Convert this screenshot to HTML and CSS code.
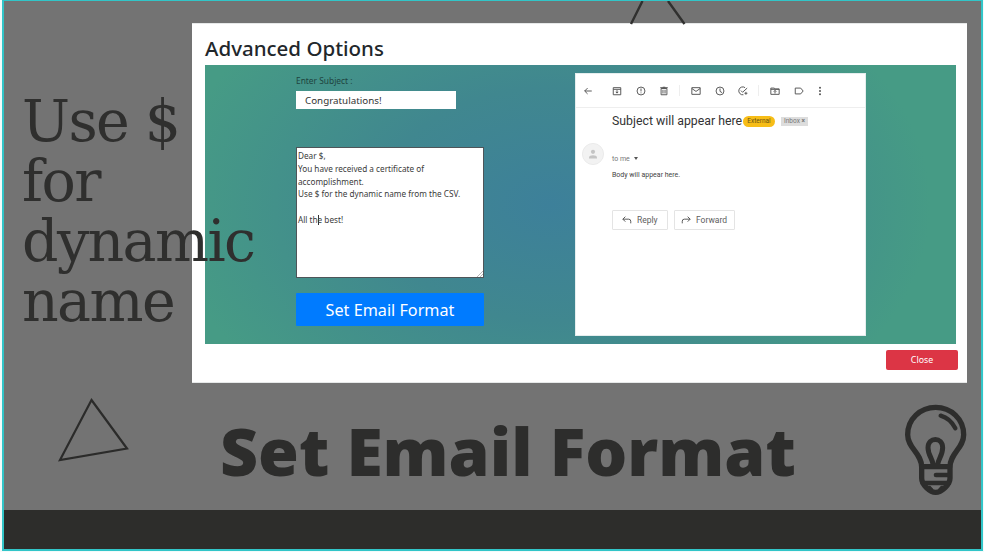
FILE: index.html
```html
<!DOCTYPE html>
<html lang="en">
<head>
<meta charset="utf-8">
<title>Set Email Format</title>
<link rel="stylesheet" href="styles.css">
</head>
<body>
<main class="slide">
  <svg class="tri tri-top" width="62" height="24" viewBox="0 0 62 24" fill="none" stroke="#30302f" stroke-width="2.4"><path d="M2 23L13.5 0M39 0L55.5 23"/></svg>
  <div class="upper">
    <h2 class="hint">Use $<br>for<br>dynamic<br>name</h2>
    <section class="modal">
      <h1 class="modal-title">Advanced Options</h1>
      <div class="panel">
        <form class="form">
          <label class="label">Enter Subject :</label>
          <div class="subject">Congratulations!</div>
          <div class="message">Dear $,<br>You have received a certificate of<br>accomplishment.<br>Use $ for the dynamic name from the CSV.<br><br>All th<i class="caret"></i>e best!
            <svg class="grip" width="6" height="6" viewBox="0 0 6 6" stroke="#999" stroke-width=".7"><path d="M0 6L6 0M3 6L6 3"/></svg>
          </div>
          <button class="set" type="button">Set Email Format</button>
        </form>
        <article class="mail">
          <div class="tools">
            <svg class="ico" viewBox="0 0 24 24"><path d="M21 12H4M11 5l-7 7 7 7"/></svg>
            <svg class="ico g1" viewBox="0 0 24 24"><path d="M3 4h18v17H3zM3 8h18M12 10v7M9 14l3 3 3-3"/></svg>
            <svg class="ico g2" viewBox="0 0 24 24"><circle cx="12" cy="12" r="9.5"/><path d="M12 6v7M12 15.5v2"/></svg>
            <svg class="ico g2" viewBox="0 0 24 24"><path d="M5 6h14v15H5zM3 4h18M9 3h6M9.5 9v9M14.5 9v9"/></svg>
            <i class="sep"></i>
            <svg class="ico" viewBox="0 0 24 24"><path d="M2 4h20v16H2zM2 6l10 7 10-7"/></svg>
            <svg class="ico g2" viewBox="0 0 24 24"><circle cx="12" cy="12" r="9.5"/><path d="M12 6v7l5 3"/></svg>
            <svg class="ico g2" viewBox="0 0 24 24"><path d="M17 4A9.500 9.500 0 1 0 13 21M7 11l4 4L22 5M19 14v7M15.500 17.500h7"/></svg>
            <i class="sep"></i>
            <svg class="ico" viewBox="0 0 24 24"><path d="M2 5h8l2 2h10v13H2zM2 8h20M12 18v-7M9 13.500l3-3 3 3"/></svg>
            <svg class="ico g2" viewBox="0 0 24 24"><path d="M3 5h13l6 7-6 7H3z"/></svg>
            <svg class="ico g3 dots" viewBox="0 0 24 24"><circle cx="12" cy="4" r="2.400"/><circle cx="12" cy="12" r="2.400"/><circle cx="12" cy="20" r="2.400"/></svg>
          </div>
          <div class="subject-row">
            <span class="subject-text">Subject will appear here</span>
            <span class="external">External</span>
            <span class="inbox">Inbox <b>×</b></span>
          </div>
          <div class="content">
            <svg class="avatar" width="22" height="22" viewBox="0 0 22 22"><circle cx="11" cy="11" r="10.600" fill="#f2f2f2" stroke="#e7e7e7" stroke-width=".8"/><circle cx="11" cy="8.800" r="2.100" fill="#c4c4c4"/><path d="M7 15.500v-1c0-3 8-3 8 0v1z" fill="#c4c4c4"/></svg>
            <div class="text">
              <p class="to">to me <i class="down"></i></p>
              <p class="body">Body will appear here.</p>
              <div class="actions">
                <span class="action reply"><svg class="ico" viewBox="0 0 24 24"><path d="M8 4L2 10l6 6M2 10h14q5 0 5 5v5"/></svg>Reply</span>
                <span class="action forward"><svg class="ico" viewBox="0 0 24 24"><path d="M16 4l6 6-6 6M22 10H8q-5 0-5 5v5"/></svg>Forward</span>
              </div>
            </div>
          </div>
        </article>
      </div>
      <button class="close" type="button">Close</button>
    </section>
  </div>
  <div class="lower">
    <svg class="triangle" width="74" height="68" viewBox="0 0 74 68" fill="none" stroke="#2b2b2a" stroke-width="2.200"><path d="M35.500 4L71 52.500 4 64z"/></svg>
    <h2 class="headline">Set Email Format</h2>
    <svg class="bulb" width="64" height="93" viewBox="42 24 192 279" fill="none" stroke="#2d2d2c" stroke-width="16" stroke-linecap="round" stroke-linejoin="round">
      <path d="M95 216C95 174 53 160 53 119C53 72 91 37 137 37S221 72 221 119C221 160 180 174 180 216V250C180 270 154 292 137 292S95 270 95 250z"/>
      <path d="M152 62Q181 70 196 100" stroke-width="13"/>
      <path d="M129 208C128 192 114 180 114 158C114 125 158 125 158 158C158 180 145 192 143 208" stroke-width="15"/>
      <path d="M96 215H179" stroke-width="16"/>
      <path d="M138 240H176" stroke-width="14"/>
      <path d="M98 264H176" stroke-width="14"/>
      <path d="M103 274H120L128 283 112 280zM171 274H154L146 283 162 280z" fill="#2d2d2c" stroke-width="4"/>
    </svg>
  </div>
  <footer class="bar"></footer>
</main>
</body>
</html>
```

FILE: styles.css
```css
* { box-sizing: border-box; }
body { margin: 0; background: #f4fafa; overflow: hidden; font-family: "Noto Sans", "Open Sans", sans-serif; }
h1, h2, p { margin: 0; font-weight: 400; }
button { border: 0; padding: 0; font-family: inherit; color: #fff; }
.slide { position: relative; display: flex; flex-direction: column; width: 981px; height: 551px; margin-left: 2px; border: 2px solid #32c5c8; border-top-width: 1px; background: #737373; }
.tri-top { position: absolute; left: 625px; top: 0; }
.upper { display: flex; height: 381px; padding-top: 22px; }
.hint { position: relative; z-index: 1; width: 188px; padding: 68px 0 0 18px; white-space: nowrap; color: #2f2f2e; font: 400 57px/60px "DejaVu Serif", serif; letter-spacing: -1.6px; }
.modal { display: flex; flex-direction: column; width: 775px; height: 360px; padding: 0 10px 0 13px; background: #fff; border: solid #e6e8e8; border-width: 1px 0 1px 0; }
.modal-title { height: 41px; color: #22272b; font-size: 20.5px; line-height: 49px; font-weight: 500; white-space: nowrap; }
.panel { display: flex; width: 751px; height: 279px; padding: 8px 0 0 91px; background: radial-gradient(ellipse 380px 260px at 46% 50%, #3d809a 0%, #40878f 45%, #469b85 100%); }
.form { display: flex; flex-direction: column; width: 279px; }
.label { height: 18px; font-size: 8.4px; line-height: 15px; color: #20443f; }
.subject { width: 160px; height: 18px; padding-left: 9px; background: #fff; color: #333; font-size: 9.8px; line-height: 19px; }
.message { position: relative; width: 188px; height: 131px; margin-top: 38px; padding: 2px 1px; border: 1px solid #4e5559; background: #fff; color: #3b3b3b; font-size: 8.2px; line-height: 12.8px; white-space: nowrap; }
.caret { display: inline-block; width: 1px; height: 10px; margin-right: -1px; vertical-align: -2px; background: #333; }
.grip { position: absolute; right: 0; bottom: 0; }
.set { width: 188px; height: 33px; margin-top: 15px; border-radius: 1px; background: #007bff; font-size: 16.2px; }
.mail { width: 291px; height: 263px; background: #fff; border: 1px solid #e5eeee; }
.ico { flex: none; width: 10px; height: 10px; fill: none; stroke: #555; stroke-width: 2.3; }
.dots { fill: #555; stroke: none; }
.tools { display: flex; align-items: center; height: 34px; padding-left: 7px; border-bottom: 1px solid #eee; }
.g1 { margin-left: 19px; }
.g2 { margin-left: 13.500px; }
.g3 { margin-left: 11px; }
.sep { width: 1px; height: 11px; margin: 0 11px 0 10px; background: #eee; }
.subject-row { display: flex; align-items: center; height: 26px; padding-left: 36px; white-space: nowrap; }
.subject-text { width: 131px; color: #333; font: 12.3px Roboto, sans-serif; }
.external { width: 32px; height: 11px; border-radius: 6px; background: #f7bd17; color: #6b5310; font: 6.5px/11px Roboto, sans-serif; text-align: center; }
.inbox { width: 27px; height: 9px; margin-left: 6px; background: #ddd; color: #777; font: 6.500px/9px Roboto, sans-serif; text-align: center; }
.content { display: flex; padding: 9px 0 0 6px; }
.text { padding: 11px 0 0 8px; font-family: Roboto, sans-serif; }
.to { font-size: 7px; line-height: 11px; color: #777; }
.down { display: inline-block; margin-left: 2px; border: 2px solid transparent; border-top: 3px solid #555; border-bottom: 0; vertical-align: 1px; }
.body { margin-top: 5px; font-size: 7px; line-height: 10px; color: #444; }
.actions { display: flex; gap: 6px; margin-top: 30px; }
.action { display: flex; align-items: center; gap: 5px; width: 56px; height: 20px; padding-left: 9px; border: 1px solid #e4e4e4; border-radius: 1px; color: #5e5e5e; font-size: 8.5px; }
.forward { width: 61px; padding-left: 6px; }
.close { align-self: flex-end; flex: none; width: 72px; height: 20px; margin: 6px -1px 0 0; border-radius: 2px; background: #dc3545; font-size: 8.8px; }
.lower { display: flex; height: 128px; align-items: flex-start; }
.triangle { flex: none; margin: 14px 0 0 52px; }
.headline { width: 684px; padding: 28px 0 0 90px; color: #2d2d2c; font: 800 66px/80px "Open Sans", sans-serif; white-space: nowrap; }
.bulb { flex: none; margin: 21px 0 0 90px; }
.bar { flex: 1; background: #2d2d2b; }
```
